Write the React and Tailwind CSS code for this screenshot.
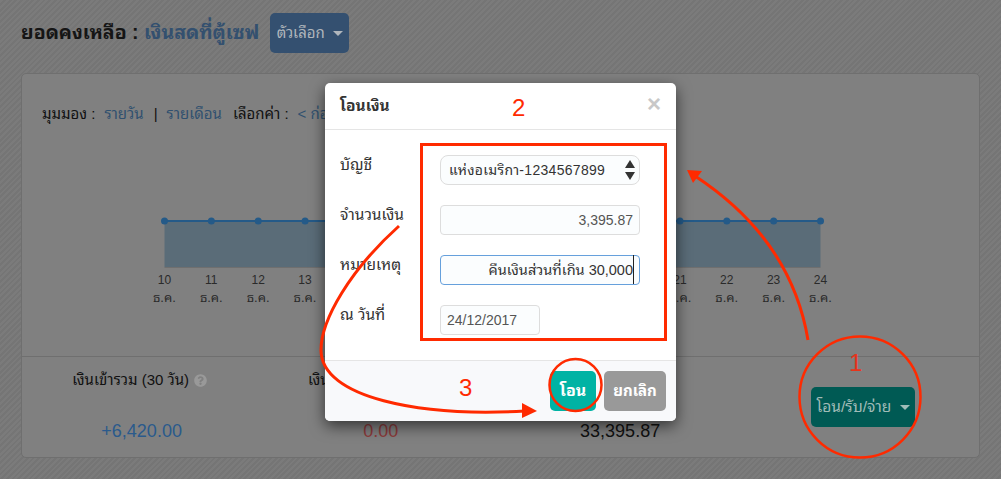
import { FaQuestionCircle } from "react-icons/fa"

const font = { fontFamily: '"Liberation Sans", "Noto Sans Thai Looped", "Loma", "Noto Sans Thai", "Noto Sans", "DejaVu Sans", sans-serif' }
const days = [10, 11, 12, 13, 14, 15, 16, 17, 18, 19, 20, 21, 22, 23, 24]

const Caret = ({ className }) => (
  <span className={`inline-block w-0 h-0 border-x-[5px] border-x-transparent border-t-[5px] ${className}`} />
)

const Stat = ({ label, value, color, help }) => (
  <div className="flex flex-col items-center pt-[13px]">
    <div className="flex items-center gap-[5px] h-5 pr-[4px] text-[15px] leading-5 text-[#111]">
      <span>{label}</span>
      {help && <FaQuestionCircle className="text-[13px] text-[#999]" />}
    </div>
    <div className={`mt-[29px] text-[18px] leading-6 ${color}`}>{value}</div>
  </div>
)

const Chart = () => (
  <div className="mt-[89px] ml-[120px] w-[702px]">
    <svg width="702" height="56" viewBox="0 0 702 56" className="block">
      <rect x="22.5" y="8" width="656" height="46" fill="#5a6c78" />
      <line x1="22.5" y1="54.5" x2="678.5" y2="54.5" stroke="#6f6f6f" />
      <line x1="22.5" y1="8" x2="678.5" y2="8" stroke="#245a88" strokeWidth="2" />
      {days.map((d, i) => (
        <circle key={d} cx={22.5 + i * 46.86} cy="8" r="3.5" fill="#245a88" />
      ))}
    </svg>
    <div className="flex mt-[2px] -ml-px">
      {days.map((d) => (
        <div key={d} className="w-[46.86px] shrink-0 text-center text-[#2a2a2a]">
          <div className="text-[12px] leading-[18px]">{d}</div>
          <div className="text-[13px] leading-[17px]">ธ.ค.</div>
        </div>
      ))}
    </div>
  </div>
)

const Page = () => (
  <div className="h-full px-[21px] pt-[13px]">
    <div className="flex items-center h-10 gap-[11px]">
      <h1 className="text-[19.5px] font-bold text-[#151515]">
        ยอดคงเหลือ : <span className="text-[#33506f]">เงินสดที่ตู้เซฟ</span>
      </h1>
      <button className="flex items-center gap-2 h-10 w-[79px] justify-center rounded-[5px] bg-[#345070] text-[15px] text-[#b0b6bc]">
        ตัวเลือก <Caret className="border-t-[#b0b6bc]" />
      </button>
    </div>
    <div className="mt-5 h-[385px] w-[959px] rounded-[5px] border border-[#6f6f6f] bg-[#808080]">
      <div className="h-[282px] overflow-hidden pt-[30px]">
        <div className="pl-5 flex text-[15px] leading-5 text-[#111]">
          <span>มุมมอง :</span>
          <a className="ml-[9px] text-[#30506f]">รายวัน</a>
          <span className="ml-[10px]">|</span>
          <a className="ml-[9px] text-[#30506f]">รายเดือน</a>
          <span className="ml-[11px]">เลือกค่า :</span>
          <a className="ml-[9px] text-[#30506f]">&lt; ก่อน</a>
        </div>
        <Chart />
      </div>
      <div className="grid grid-cols-4 h-[101px] border-t border-[#6f6f6f]">
        <Stat label="เงินเข้ารวม (30 วัน)" value="+6,420.00" color="text-[#2a5a8c]" help />
        <Stat label="เงินออกรวม (30 วัน)" value="0.00" color="text-[#8a3a3a]" help />
        <Stat value="33,395.87" color="text-[#111]" />
        <div className="flex justify-center pt-[30px] pl-[8px]">
          <button className="flex items-center justify-center gap-[9px] h-10 w-[104px] rounded-[5px] bg-[#005a54] text-[15.5px] text-[#a0bcb8]">
            โอน/รับ/จ่าย <Caret className="border-t-[#a0bcb8]" />
          </button>
        </div>
      </div>
    </div>
  </div>
)

const Row = ({ label, children, className = "" }) => (
  <div className={`flex h-[30px] ${className}`}>
    <label className="w-[100px] text-[15.5px] leading-5 text-[#333]">{label}</label>
    {children}
  </div>
)

const inputCls = "h-[30px] border bg-[#fbfdfe] outline-none"

const Modal = () => (
  <div className="absolute left-[325px] top-[83px] w-[351px] h-[338px] flex flex-col rounded-[5px] bg-white shadow-[0_5px_15px_rgba(0,0,0,0.6)]">
    <div className="flex items-center justify-between h-[47px] border-b border-[#e5e5e5] px-[15px]">
      <h4 className="text-[15.5px] font-bold text-[#333]">โอนเงิน</h4>
      <span className="text-[24px] font-bold leading-none text-[#c8c8c8] -mt-1">×</span>
    </div>
    <div className="flex-1 pl-[15px] pt-[25px]">
      <Row label="บัญชี">
        <div className="relative">
          <select className={`${inputCls} w-[200px] appearance-none rounded-[8px] border-[#ddd] pl-[8px] text-[14px] tracking-[0.3px] text-[#333]`}>
            <option>แห่งอเมริกา-1234567899</option>
          </select>
          <svg width="12" height="22" viewBox="0 0 12 22" className="absolute right-[4px] top-[4px]">
            <path d="M6 1 11 9H1Z M1 13H11L6 21Z" fill="#333" />
          </svg>
        </div>
      </Row>
      <Row label="จำนวนเงิน" className="mt-5">
        <input readOnly value="3,395.87" className={`${inputCls} w-[200px] rounded-[4px] border-[#ddd] px-[6px] text-right text-[14px] text-[#555]`} />
      </Row>
      <Row label="หมายเหตุ" className="mt-5">
        <div className="relative">
          <input readOnly value="คืนเงินส่วนที่เกิน 30,000" className={`${inputCls} w-[200px] rounded-[4px] border-[#66a0dc] px-[6px] pb-[3px] text-right text-[14.5px] text-[#333]`} />
          <span className="absolute right-[6px] top-0 h-[29px] w-[1.5px] bg-[#222]" />
        </div>
      </Row>
      <Row label="ณ วันที่" className="mt-5">
        <input readOnly value="24/12/2017" className={`${inputCls} w-[100px] rounded-[4px] border-[#ddd] px-[6px] text-[14px] text-[#555]`} />
      </Row>
    </div>
    <div className="flex justify-end gap-2 h-[61px] pt-[10px] pr-[10px] border-t border-[#e5e5e5] bg-[#f8f9fb] rounded-b-[5px]">
      <button className="h-10 w-[46px] rounded-[5px] bg-[#00b3a4] text-[16px] font-bold text-white">โอน</button>
      <button className="h-10 w-[62px] rounded-[5px] bg-[#999] text-[15px] font-bold text-white">ยกเลิก</button>
    </div>
  </div>
)

const Marks = () => (
  <>
    <svg width="1001" height="479" viewBox="0 0 1001 479" fill="none" stroke="#ff2a00" className="absolute inset-0">
      <rect x="421.5" y="144.5" width="244" height="195" strokeWidth="3" />
      <circle cx="860" cy="397" r="60.5" strokeWidth="2.5" />
      <circle cx="575.5" cy="385" r="26" strokeWidth="2.5" />
      <path d="M808 340C798 280 765 222 695 176" strokeWidth="3" />
      <path d="M687 170 702 171 693 183Z" fill="#ff2a00" stroke="none" />
      <path d="M399 226C350 270 321 320 321 350C321 398 420 417 525 411" strokeWidth="3" />
      <path d="M537 411 522 403 522 418Z" fill="#ff2a00" stroke="none" />
    </svg>
    <span className="absolute left-[512px] top-[94px] text-[24px] leading-7 text-[#ff2a00]">2</span>
    <span className="absolute left-[459px] top-[374px] text-[24px] leading-7 text-[#ff2a00]">3</span>
    <span className="absolute left-[849px] top-[349px] text-[24px] leading-7 text-[#e8331a]">1</span>
  </>
)

const App = () => {
  return (
    <div style={font} className="relative w-[1001px] h-[479px] overflow-hidden bg-[repeating-linear-gradient(-45deg,#7b7b7b_0,#7b7b7b_2px,#757575_2px,#757575_4px)]">
      <Page />
      <Modal />
      <Marks />
    </div>
  )
}

export default App
